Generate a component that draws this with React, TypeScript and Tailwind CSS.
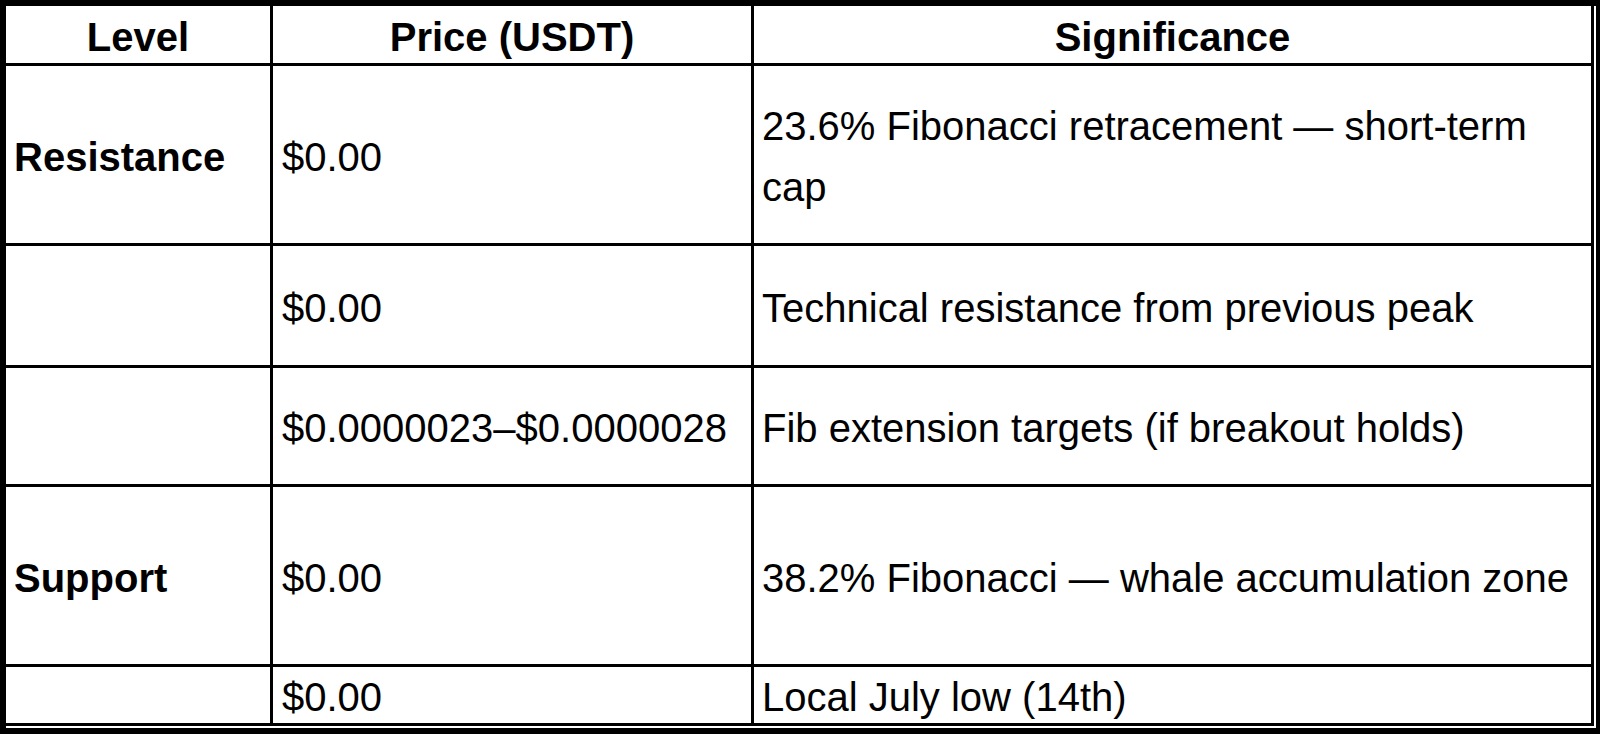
const rows = [
  { level: "Resistance", price: "$0.00", sig: ["23.6% Fibonacci retracement — short-term", "cap"], h: "h-[180px]" },
  { level: "", price: "$0.00", sig: ["Technical resistance from previous peak"], h: "h-[122px]" },
  { level: "", price: "$0.0000023–$0.0000028", sig: ["Fib extension targets (if breakout holds)"], h: "h-[119px]" },
  { level: "Support", price: "$0.00", sig: ["38.2% Fibonacci — whale accumulation zone"], h: "h-[180px]" },
  { level: "", price: "$0.00", sig: ["Local July low (14th)"], h: "h-[59px]" },
];

const cell = "flex items-center border-r-[3px] border-b-[3px] border-black pt-[5px]";

export default function App() {
  return (
    <div className="h-[734px] w-[1600px] bg-black pt-[6px] pl-[6px] pr-[4px] pb-[6px]">
      <div
        className="h-full w-full bg-white pr-[2px] pb-[2px] text-[40px] leading-[61px] text-black"
        style={{ fontFamily: '"Liberation Sans", Arial, sans-serif' }}
      >
        <div className="grid grid-cols-[267px_481px_840px]">
          <div className={`${cell} h-[60px] justify-center font-bold`}>Level</div>
          <div className={`${cell} h-[60px] justify-center font-bold`}>Price (USDT)</div>
          <div className={`${cell} h-[60px] justify-center font-bold`}>Significance</div>

          {rows.map((r, i) => (
            <div key={i} className="contents">
              <div className={`${cell} ${r.h} pl-[8px] font-bold`}>{r.level}</div>
              <div className={`${cell} ${r.h} pl-[9px] whitespace-nowrap`}>{r.price}</div>
              <div className={`${cell} ${r.h} pl-[8px]`}>
                <div>
                  {r.sig.map((line, j) => (
                    <div key={j} className="whitespace-nowrap">
                      {line}
                    </div>
                  ))}
                </div>
              </div>
            </div>
          ))}
        </div>
      </div>
    </div>
  );
}
